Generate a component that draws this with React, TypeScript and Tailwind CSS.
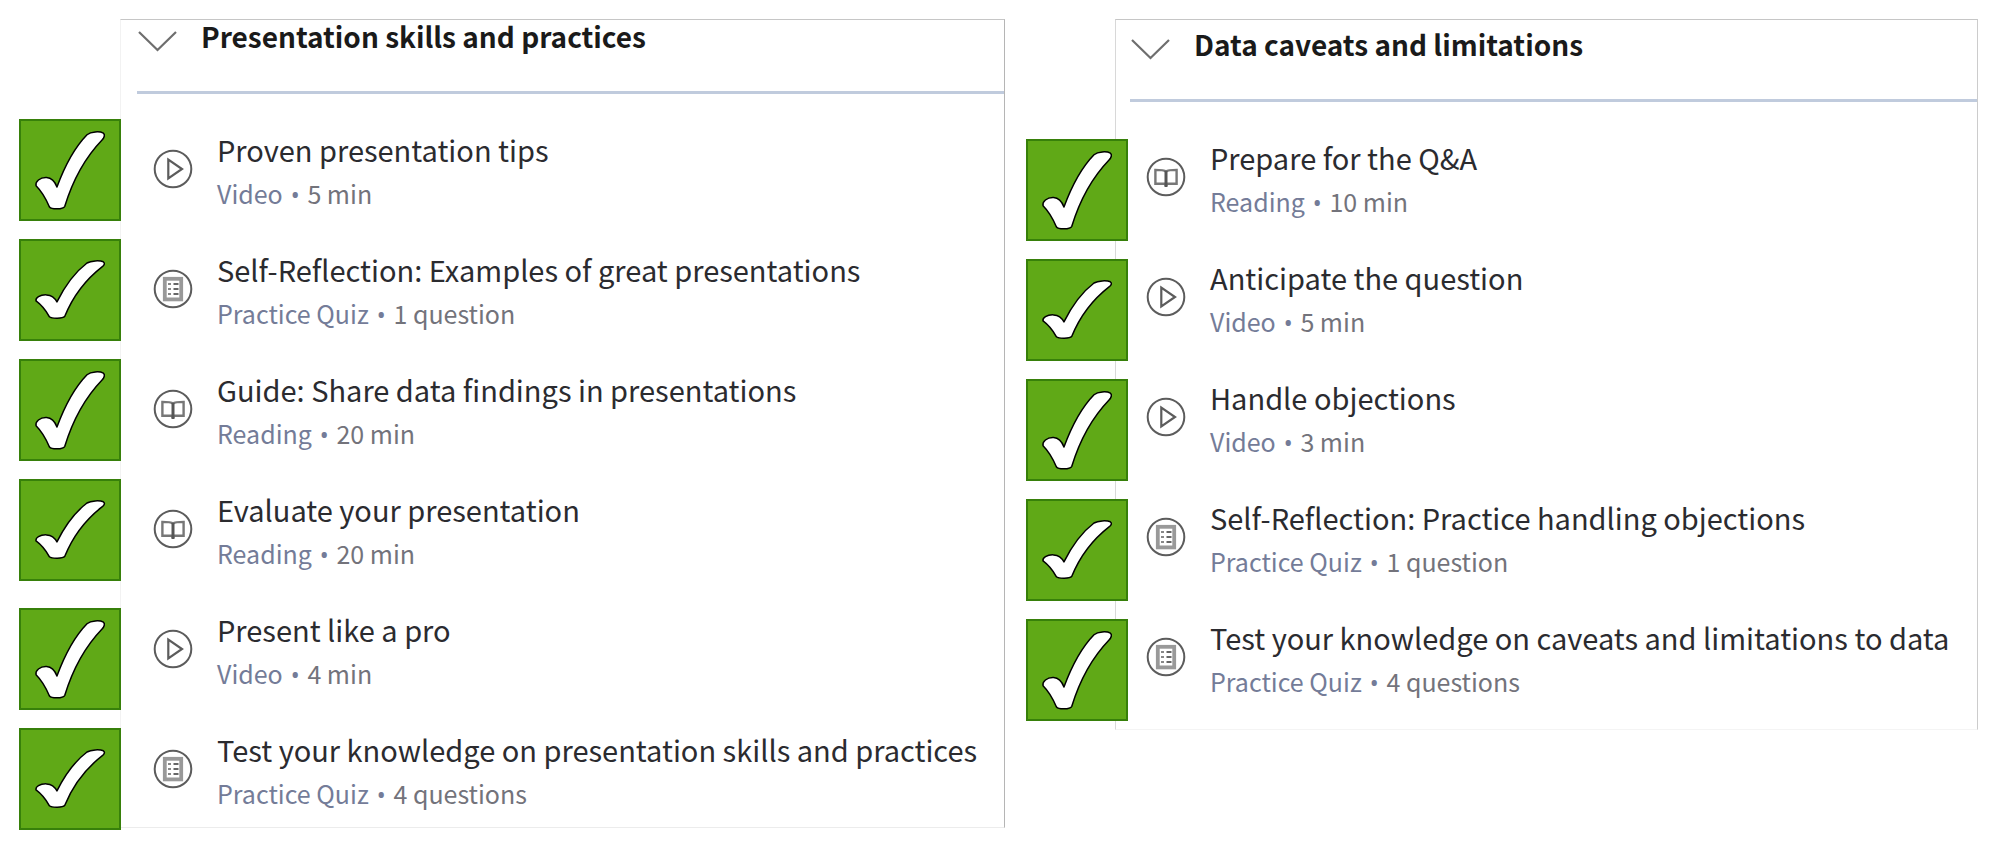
type Kind = "Video" | "Practice Quiz" | "Reading";

interface Lesson {
  title: string;
  kind: Kind;
  length: string;
}

const presentationLessons: Lesson[] = [
  { title: "Proven presentation tips", kind: "Video", length: "5 min" },
  { title: "Self-Reflection: Examples of great presentations", kind: "Practice Quiz", length: "1 question" },
  { title: "Guide: Share data findings in presentations", kind: "Reading", length: "20 min" },
  { title: "Evaluate your presentation", kind: "Reading", length: "20 min" },
  { title: "Present like a pro", kind: "Video", length: "4 min" },
  { title: "Test your knowledge on presentation skills and practices", kind: "Practice Quiz", length: "4 questions" },
];

const caveatLessons: Lesson[] = [
  { title: "Prepare for the Q&A", kind: "Reading", length: "10 min" },
  { title: "Anticipate the question", kind: "Video", length: "5 min" },
  { title: "Handle objections", kind: "Video", length: "3 min" },
  { title: "Self-Reflection: Practice handling objections", kind: "Practice Quiz", length: "1 question" },
  { title: "Test your knowledge on caveats and limitations to data", kind: "Practice Quiz", length: "4 questions" },
];

function CheckTile({ short }: { short: boolean }) {
  return (
    <svg
      viewBox="0 0 306 306"
      className="block size-[102px] shrink-0 border-2 border-[#37800a] bg-[#60a917]"
      aria-hidden="true"
    >
      <path
        transform={short ? "translate(-4 36) scale(1.02 0.76)" : "translate(-4 -1) scale(1.02)"}
        d="M114 203C135 146 165 85 206 43C218 33 245 32 256 38C262 43 259 52 252 59C205 108 163 180 138 262C132 272 98 272 91 264C80 238 64 213 50 199C47 187 62 173 82 174C97 175 108 187 114 203Z"
        fill="#fff"
        stroke="#000"
        strokeWidth="1.5"
        strokeLinejoin="round"
        vectorEffect="non-scaling-stroke"
      />
    </svg>
  );
}

function KindIcon({ kind }: { kind: Kind }) {
  return (
    <svg viewBox="0 0 40 40" className="size-10 shrink-0" fill="none" stroke="#5c5c5c" aria-hidden="true">
      <circle cx="20" cy="20" r="18.3" strokeWidth="2" />
      {kind === "Video" && <path d="M15.3 10.7V29.3L29 20Z" strokeWidth="2.2" />}
      {kind === "Practice Quiz" && (
        <>
          <rect x="11.8" y="9.8" width="16.4" height="20.6" stroke="#999" strokeWidth="3.8" />
          <path d="M15 15h3M15 20h3M15 25h3" stroke="#888" strokeWidth="1.8" />
          <path d="M20.5 15h5M20.5 20h5M20.5 25h5" stroke="#666" strokeWidth="1.8" />
        </>
      )}
      {kind === "Reading" && (
        <>
          <path d="M20 14.5C18 12.9 14 12.9 9.4 12.9V26.8H18.5L20 28.3L21.5 26.8H30.6V12.9C26 12.9 22 12.9 20 14.5Z" stroke="#777" strokeWidth="2.4" />
          <path d="M20 14V30" stroke="#555" strokeWidth="3" />
        </>
      )}
    </svg>
  );
}

function Header({ title }: { title: string }) {
  return (
    <h2>
      <button type="button" aria-expanded="true" className="flex items-center gap-6 text-left text-[28px] leading-8 font-bold text-[#1a1a1a]">
        <svg viewBox="0 0 40 32" className="h-8 w-10 shrink-0" fill="none" stroke="#6e6e6e" strokeWidth="2.2" aria-hidden="true">
          <path d="M2 12L20.5 30L39 12" />
        </svg>
        {title}
      </button>
    </h2>
  );
}

function LessonList({ lessons }: { lessons: Lesson[] }) {
  return (
    <ul>
      {lessons.map((lesson) => (
        <li key={lesson.title} className="h-[120px] last:h-[88px]">
          <a href="#" className="flex gap-6">
            <span className="pt-[21px]">
              <KindIcon kind={lesson.kind} />
            </span>
            <span className="flex flex-col">
              <span className="text-[29px] leading-[42px] text-[#2b2b2f]">{lesson.title}</span>
              <span className="text-[25px] leading-[46px] text-[#73737b]">
                <span className="text-[#747c98]">
                  {lesson.kind} <span className="mx-[2px] font-['Open_Sans',sans-serif] leading-none">•</span>
                </span>{" "}
                {lesson.length}
              </span>
            </span>
          </a>
        </li>
      ))}
    </ul>
  );
}

export default function App() {
  return (
    <main className="grid grid-cols-[986fr_952fr] items-start gap-[21px] bg-white py-[19px] pr-[21px] pl-[19px] font-['Noto_Sans_CJK_SC',sans-serif]">
      <section className="flex">
        <div className="z-10 -mb-2 flex flex-col gap-[27px] pt-[100px]">
          <div className="flex flex-col gap-[18px]">
            <CheckTile short={false} />
            <CheckTile short />
            <CheckTile short={false} />
            <CheckTile short />
          </div>
          <div className="flex flex-col gap-[18px]">
            <CheckTile short={false} />
            <CheckTile short />
          </div>
        </div>
        <div className="-ml-px flex-1 border border-t-[#c6c6c6] border-r-[#b5b5b5] border-b-[#ececec] border-l-[#f2f2f2] pb-[11px] pl-4">
          <div className="h-[74px] border-b-3 border-[#c0cbdd]">
            <Header title="Presentation skills and practices" />
          </div>
          <div className="pt-[34px] pl-4">
            <LessonList lessons={presentationLessons} />
          </div>
        </div>
      </section>
      <section className="flex">
        <div className="z-10 flex flex-col gap-[18px] pt-[120px]">
          <CheckTile short={false} />
          <CheckTile short />
          <CheckTile short={false} />
          <CheckTile short />
          <CheckTile short={false} />
        </div>
        <div className="-ml-[13px] flex-1 border border-t-[#c6c6c6] border-r-[#cccccc] border-b-[#f4f4f4] border-l-[#d8d8d8] pb-[25px] pl-[14px]">
          <div className="h-[82px] border-b-3 border-[#c0cbdd] pt-2">
            <Header title="Data caveats and limitations" />
          </div>
          <div className="pt-[34px] pl-4">
            <LessonList lessons={caveatLessons} />
          </div>
        </div>
      </section>
    </main>
  );
}
